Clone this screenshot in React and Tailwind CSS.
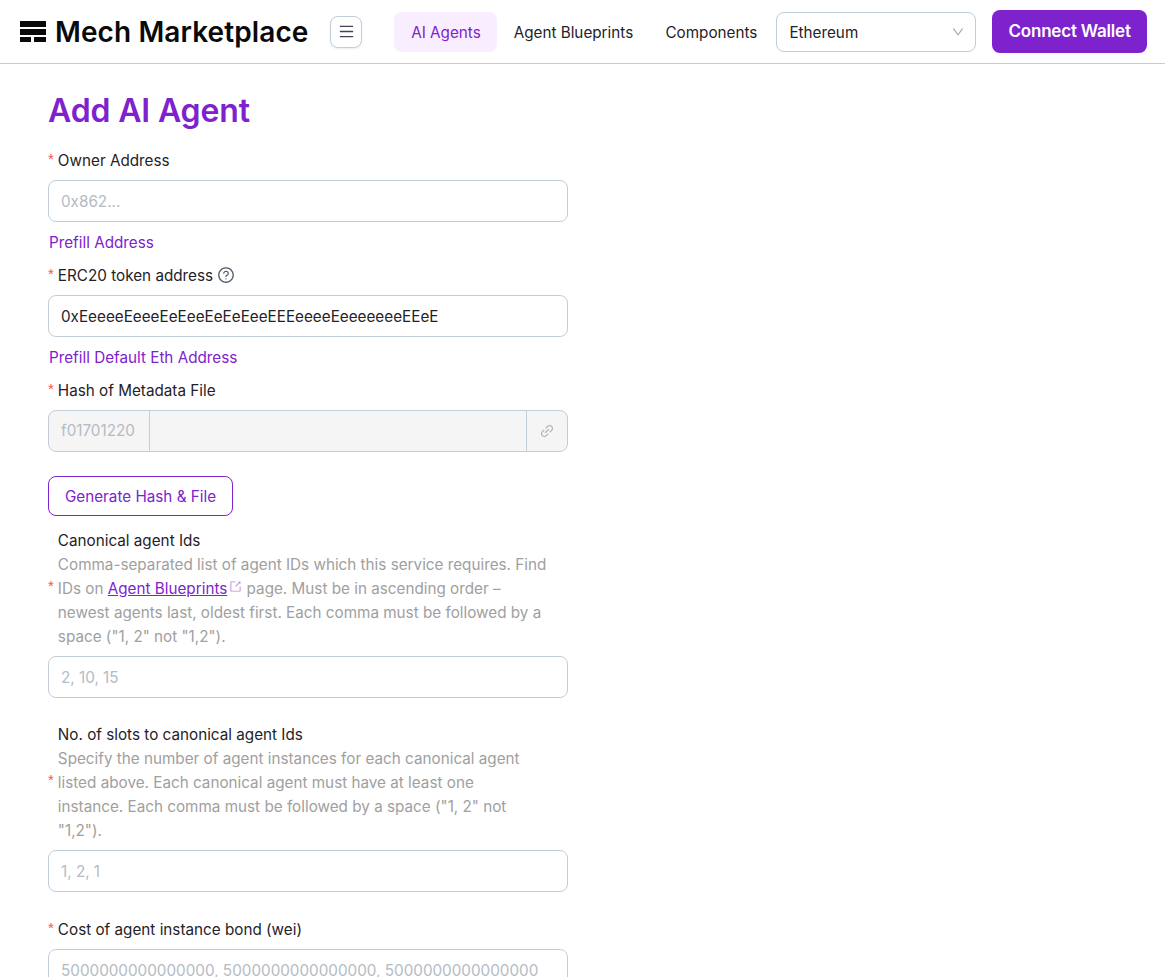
import { AiOutlineDown, AiOutlineExport, AiOutlineLink, AiOutlineMenu, AiOutlineQuestionCircle } from "react-icons/ai";

function Star() {
  return <span className="mr-1 -translate-y-[3px] text-[15px] leading-none text-[#ff4d4f] font-['Liberation_Sans',sans-serif]">*</span>;
}

function Label({ children }) {
  return (
    <label className="flex h-6 items-center pt-0.5 text-[#1f2229]">
      <Star />
      {children}
    </label>
  );
}

function Field({ placeholder, value }) {
  return (
    <input
      readOnly
      placeholder={placeholder}
      value={value}
      className="h-[42px] w-full rounded-lg border border-[#c2cdda] bg-white px-3 text-[#1f2229] outline-none placeholder:text-[#b4bbc4]"
    />
  );
}

function Prefill({ children }) {
  return <div className="mt-2 h-6 pt-px pl-px leading-6 text-[#7e22ce]">{children}</div>;
}

function LongLabel({ title, width, children }) {
  return (
    <div className="flex items-center">
      <Star />
      <div className={width}>
        <div className="pt-px leading-6 text-[#1f2229]">{title}</div>
        <div className="leading-6 text-[#a0a0a0]">{children}</div>
      </div>
    </div>
  );
}

export default function App() {
  return (
    <div className="h-[977px] overflow-hidden bg-white font-['Inter',sans-serif] text-[15.25px]">
      <header className="flex h-16 items-center border-b border-[#c2cdda] pl-5 pr-[18px]">
        <svg width="26" height="21" viewBox="0 0 26 21" className="shrink-0" fill="#0a0a0a">
          <rect x="0" y="0" width="26" height="6" />
          <rect x="0" y="8" width="26" height="6" />
          <rect x="0" y="16" width="11" height="5" />
          <rect x="14" y="16" width="12" height="5" />
        </svg>
        <span className="ml-[9px] text-[28px] font-semibold tracking-[0.1px] whitespace-nowrap text-[#0a0a0a]">Mech Marketplace</span>
        <button className="ml-[22px] flex h-8 w-8 items-center justify-center rounded-lg border border-[#c2cdda] bg-white shadow-[0_1px_2px_rgba(0,0,0,0.08)]">
          <AiOutlineMenu size={17} className="text-[#3f4550]" />
        </button>
        <nav className="ml-8 flex items-center">
          <span className="flex h-10 w-[103px] items-center justify-center rounded-lg bg-[#f9eeff] pt-[3px] text-[#7e22ce]">AI Agents</span>
          <span className="flex h-10 w-[152px] items-center justify-center pt-[3px] text-[#1f2229]">Agent Blueprints</span>
          <span className="flex h-10 w-[125px] items-center justify-center pt-[3px] pr-px text-[#1f2229]">Components</span>
        </nav>
        <div className="ml-[2px] flex h-10 w-[200px] items-center justify-between rounded-lg border border-[#c2cdda] pt-[3px] pl-3 pr-[10px] text-[#1f2229]">
          Ethereum
          <AiOutlineDown size={14} className="-translate-y-px text-[#a0a5ad]" />
        </div>
        <button className="ml-4 h-[43px] w-[155px] rounded-lg bg-[#7e22ce] text-[17px] font-semibold tracking-[-0.2px] text-white">Connect Wallet</button>
      </header>

      <main className="ml-12 w-[520px] pt-[27px]">
        <h1 className="h-10 text-[32px] leading-10 font-semibold tracking-[-0.15px] text-[#7e22ce]">Add AI Agent</h1>

        <div className="mt-[17px]"><Label>Owner Address</Label></div>
        <div className="mt-2"><Field placeholder="0x862..." /></div>
        <Prefill>Prefill Address</Prefill>

        <div className="mt-[9px]">
          <Label>
            ERC20 token address
            <AiOutlineQuestionCircle size={18} className="ml-1 -translate-y-px text-[#4e5968]" />
          </Label>
        </div>
        <div className="mt-2"><Field value="0xEeeeeEeeeEeEeeEeEeEeeEEEeeeeEeeeeeeeEEeE" /></div>
        <Prefill>Prefill Default Eth Address</Prefill>

        <div className="mt-[9px]"><Label>Hash of Metadata File</Label></div>
        <div className="mt-2 flex h-[42px] rounded-lg border border-[#c2cdda] bg-[#f5f5f5] text-[#b4bbc4]">
          <div className="flex w-[101px] items-center border-r border-[#c2cdda] pl-3">f01701220</div>
          <div className="flex-1" />
          <div className="flex w-[41px] items-center justify-center border-l border-[#c2cdda]">
            <AiOutlineLink size={16} className="text-[#aab0b8]" />
          </div>
        </div>

        <button className="mt-6 h-10 w-[185px] rounded-lg border border-[#7e22ce] bg-white pt-0.5 text-[#7e22ce]">Generate Hash &amp; File</button>

        <div className="mt-3">
          <LongLabel title="Canonical agent Ids" width="w-[494px]">
            Comma-separated list of agent IDs which this service requires. Find IDs on{" "}
            <a className="text-[#7e22ce] underline">Agent Blueprints</a>
            <AiOutlineExport size={13} className="ml-0.5 inline align-[1px] text-[#c084e0]" />{" "}
            page. Must be in ascending order – newest agents last, oldest first. Each comma must be followed by a space ("1, 2" not "1,2").
          </LongLabel>
        </div>
        <div className="mt-[7px]"><Field placeholder="2, 10, 15" /></div>

        <div className="mt-6">
          <LongLabel title="No. of slots to canonical agent Ids" width="w-[470px]">
            Specify the number of agent instances for each canonical agent listed above. Each canonical agent must have at least one instance. Each comma must be followed by a space ("1, 2" not "1,2").
          </LongLabel>
        </div>
        <div className="mt-[7px]"><Field placeholder="1, 2, 1" /></div>

        <div className="mt-[25px]"><Label>Cost of agent instance bond (wei)</Label></div>
        <div className="mt-2"><Field placeholder="5000000000000000, 5000000000000000, 5000000000000000" /></div>
      </main>
    </div>
  );
}
